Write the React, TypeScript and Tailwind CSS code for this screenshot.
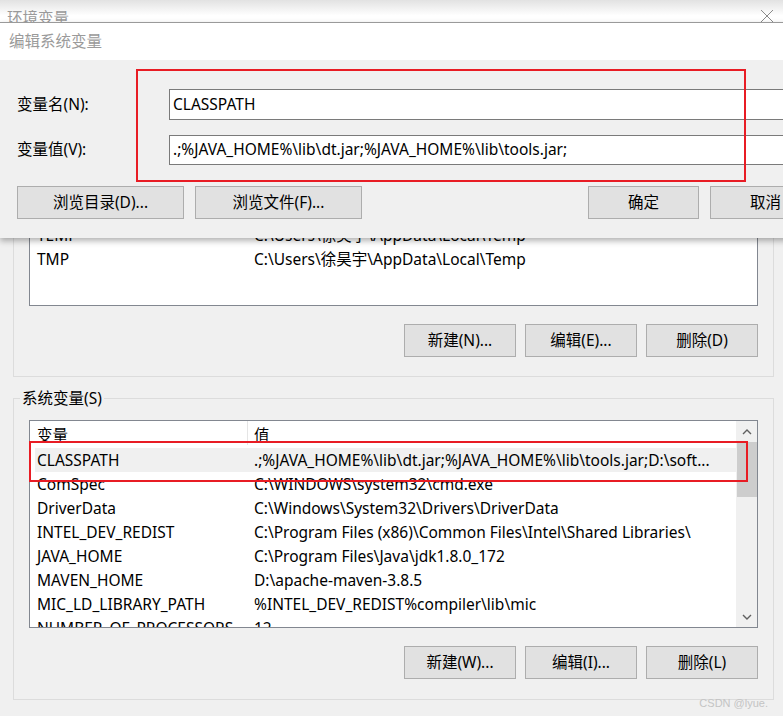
import React from "react";

type Row = { name: string; value: string };

const userRows: Row[] = [
  { name: "ChocolateyLastPathUpdate", value: "133004915446185360" },
  { name: "IntelliJ IDEA", value: "D:\\software\\IntelliJ IDEA\\bin;" },
  { name: "OneDrive", value: "C:\\Users\\徐昊宇\\OneDrive" },
  { name: "Path", value: "C:\\Users\\徐昊宇\\AppData\\Local\\Microsoft\\WindowsApps;" },
  { name: "PyCharm", value: "D:\\software\\PyCharm\\bin;" },
  { name: "TEMP", value: "C:\\Users\\徐昊宇\\AppData\\Local\\Temp" },
  { name: "TMP", value: "C:\\Users\\徐昊宇\\AppData\\Local\\Temp" },
];

const systemRows: Row[] = [
  { name: "CLASSPATH", value: ".;%JAVA_HOME%\\lib\\dt.jar;%JAVA_HOME%\\lib\\tools.jar;D:\\soft..." },
  { name: "ComSpec", value: "C:\\WINDOWS\\system32\\cmd.exe" },
  { name: "DriverData", value: "C:\\Windows\\System32\\Drivers\\DriverData" },
  { name: "INTEL_DEV_REDIST", value: "C:\\Program Files (x86)\\Common Files\\Intel\\Shared Libraries\\" },
  { name: "JAVA_HOME", value: "C:\\Program Files\\Java\\jdk1.8.0_172" },
  { name: "MAVEN_HOME", value: "D:\\apache-maven-3.8.5" },
  { name: "MIC_LD_LIBRARY_PATH", value: "%INTEL_DEV_REDIST%compiler\\lib\\mic" },
  { name: "NUMBER_OF_PROCESSORS", value: "12" },
];

function WinButton({ label, className = "" }: { label: string; className?: string }) {
  return (
    <button
      type="button"
      className={`flex h-[33px] shrink-0 items-center justify-center border border-[#adadad] bg-[#e1e1e1] text-[15.5px] leading-none text-black ${className}`}
    >
      {label}
    </button>
  );
}

function Chevron({ up }: { up?: boolean }) {
  return (
    <svg width="10" height="6" viewBox="0 0 10 6" className="text-[#606060]">
      <polyline
        points={up ? "1,5 5,1 9,5" : "1,1 5,5 9,1"}
        fill="none"
        stroke="currentColor"
        strokeWidth="1.4"
      />
    </svg>
  );
}

function Scrollbar() {
  return (
    <div className="flex w-[21px] shrink-0 flex-col bg-[#f0f0f0]">
      <div className="flex h-[21px] items-center justify-center">
        <Chevron up />
      </div>
      <div className="ml-px h-[55px] bg-[#cdcdcd]" />
      <div className="flex-1" />
      <div className="flex h-[21px] items-center justify-center">
        <Chevron />
      </div>
    </div>
  );
}

function VarList({ rows, selected, scroll, heightClass }: { rows: Row[]; selected?: string; scroll?: boolean; heightClass: string }) {
  return (
    <div className={`flex overflow-hidden border border-[#828790] bg-white ${heightClass}`}>
      <div className="min-w-0 flex-1 pl-[5px]">
        <div className="flex h-[24px] overflow-hidden leading-[28px]">
          <div className="w-[212px] shrink-0 pl-[2px]">变量</div>
          <div className="h-full w-px bg-[#e5e5e5]" />
          <div className="pl-[6px]">值</div>
        </div>
        <div className="mt-[3px]">
          {rows.map((r) => (
            <div
              key={r.name}
              className={`flex h-[24px] items-center leading-[24px] ${r.name === selected ? "bg-[#f0f0f0]" : ""}`}
            >
              <div className="w-[212px] shrink-0 truncate pl-[2px]">{r.name}</div>
              <div className="min-w-0 flex-1 truncate pl-[7px]">{r.value}</div>
            </div>
          ))}
        </div>
      </div>
      {scroll ? <Scrollbar /> : null}
    </div>
  );
}

function GroupBox({ title, children, className = "" }: { title: string; children: React.ReactNode; className?: string }) {
  return (
    <fieldset className={`ml-[13px] w-[761px] border border-[#dcdcdc] pl-[6px] pr-[15px] ${className}`}>
      <legend className="px-[2px] leading-[20px]">{title}</legend>
      <div className="ml-[9px]">{children}</div>
    </fieldset>
  );
}

export default function App() {
  return (
    <div className="relative h-[716px] w-[783px] overflow-hidden bg-[#f0f0f0] font-['Noto_Sans','Noto_Sans_CJK_SC',sans-serif] text-[15.5px] text-black">
      {/* background window: 环境变量 */}
      <div className="flex h-[31px] items-start justify-between bg-linear-to-b from-[#e2e2e2] via-white to-white pl-[7px] pr-[9px]">
        <span className="pt-[8px] leading-[20px] text-[#9a9a9a]">环境变量</span>
        <svg width="14" height="14" viewBox="0 0 14 14" className="mt-[9px] text-[#8a8a8a]">
          <path d="M1 1 L13 13 M13 1 L1 13" stroke="currentColor" strokeWidth="1" />
        </svg>
      </div>

      <GroupBox title="用户变量(U)" className="mt-[12px] pb-[19px]">
        <div className="mt-[12px]">
          <VarList rows={userRows} heightClass="h-[231px]" />
        </div>
        <div className="mt-[18px] flex justify-end gap-[9px]">
          <WinButton label="新建(N)..." className="w-[112px]" />
          <WinButton label="编辑(E)..." className="w-[112px]" />
          <WinButton label="删除(D)" className="w-[112px]" />
        </div>
      </GroupBox>

      <GroupBox title="系统变量(S)" className="mt-[11px] pb-[20px]">
        <div className="relative mt-[12px]">
          <VarList rows={systemRows} selected="CLASSPATH" scroll heightClass="h-[208px]" />
          <div className="pointer-events-none absolute left-0 top-[21px] h-[41px] w-[719px] border-2 border-[#e81c24]" />
        </div>
        <div className="mt-[18px] flex justify-end gap-[9px]">
          <WinButton label="新建(W)..." className="w-[112px]" />
          <WinButton label="编辑(I)..." className="w-[112px]" />
          <WinButton label="删除(L)" className="w-[112px]" />
        </div>
      </GroupBox>

      <span className="absolute bottom-[7px] right-[15px] font-['Liberation_Sans',sans-serif] text-[11px] leading-none text-[#c4c4c4]">
        CSDN @lyue.
      </span>

      {/* overlapping dialog: 编辑系统变量 */}
      <div className="absolute left-0 top-[22px] w-[838px] border-t border-[#9a9a9a] shadow-[0_3px_6px_rgba(0,0,0,0.3)]">
        <div className="flex h-[37px] items-center bg-white pl-[9px] text-[#9a9a9a]">编辑系统变量</div>
        <div className="relative bg-[#f0f0f0] px-[17px] pb-[19px] pt-[29px]">
          <div className="flex items-center">
            <span className="w-[152px] shrink-0">变量名(N):</span>
            <div className="flex h-[31px] flex-1 items-center border border-[#7a7a7a] bg-white pl-[3px]">CLASSPATH</div>
          </div>
          <div className="mt-[15px] flex items-center">
            <span className="w-[152px] shrink-0">变量值(V):</span>
            <div className="flex h-[30px] flex-1 items-center border border-[#7a7a7a] bg-white pl-[3px]">
              .;%JAVA_HOME%\lib\dt.jar;%JAVA_HOME%\lib\tools.jar;
            </div>
          </div>
          <div className="mt-[21px] flex items-center">
            <WinButton label="浏览目录(D)..." className="w-[167px]" />
            <WinButton label="浏览文件(F)..." className="ml-[11px] w-[167px]" />
            <div className="flex-1" />
            <WinButton label="确定" className="w-[111px]" />
            <WinButton label="取消" className="ml-[11px] w-[111px]" />
          </div>
          <div className="pointer-events-none absolute left-[136px] top-[9px] h-[113px] w-[610px] border-2 border-[#e81c24]" />
        </div>
      </div>
    </div>
  );
}
